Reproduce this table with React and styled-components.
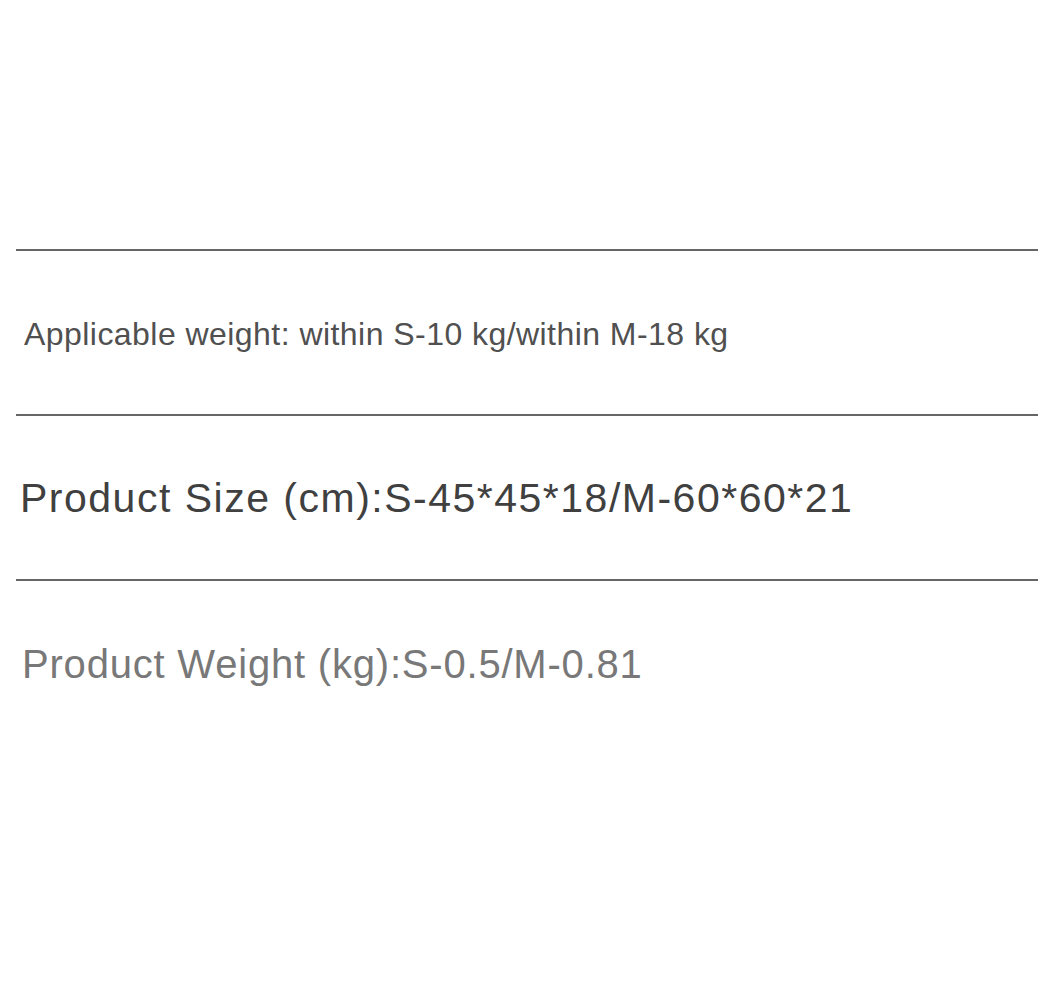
import styled, { createGlobalStyle } from 'styled-components';

const GlobalStyle = createGlobalStyle`
  html, body {
    margin: 0;
    padding: 0;
    background: #ffffff;
  }
`

const Page = styled.div`
  width: 1040px;
  height: 1000px;
  padding: 249px 2px 0 16px;
  box-sizing: border-box;
  font-family: "Liberation Sans", Arial, sans-serif;
`

const SpecRow = styled.div`
  display: flex;
  align-items: center;
  height: 165px;
  box-sizing: border-box;
  border-top: 2px solid #666;
  padding-left: ${props => props.indent}px;
`

const SpecText = styled.div`
  font-size: ${props => props.size}px;
  color: ${props => props.color};
  letter-spacing: ${props => props.spacing}px;
  white-space: nowrap;
  margin-top: ${props => props.shift || 0}px;
`

const rows = [
  { text: 'Applicable weight: within S-10 kg/within M-18 kg', size: 32, color: '#505050', spacing: 0.45, indent: 8, shift: 3 },
  { text: 'Product Size (cm):S-45*45*18/M-60*60*21', size: 41, color: '#404040', spacing: 1.5, indent: 4, shift: 1 },
  { text: 'Product Weight (kg):S-0.5/M-0.81', size: 40, color: '#787878', spacing: 0.8, indent: 6, shift: 4 },
]

export default function App () {
  return (
    <>
      <GlobalStyle />
      <Page>
        {rows.map(row => (
          <SpecRow key={row.text} indent={row.indent}>
            <SpecText size={row.size} color={row.color} spacing={row.spacing} shift={row.shift}>{row.text}</SpecText>
          </SpecRow>
        ))}
      </Page>
    </>
  )
}
